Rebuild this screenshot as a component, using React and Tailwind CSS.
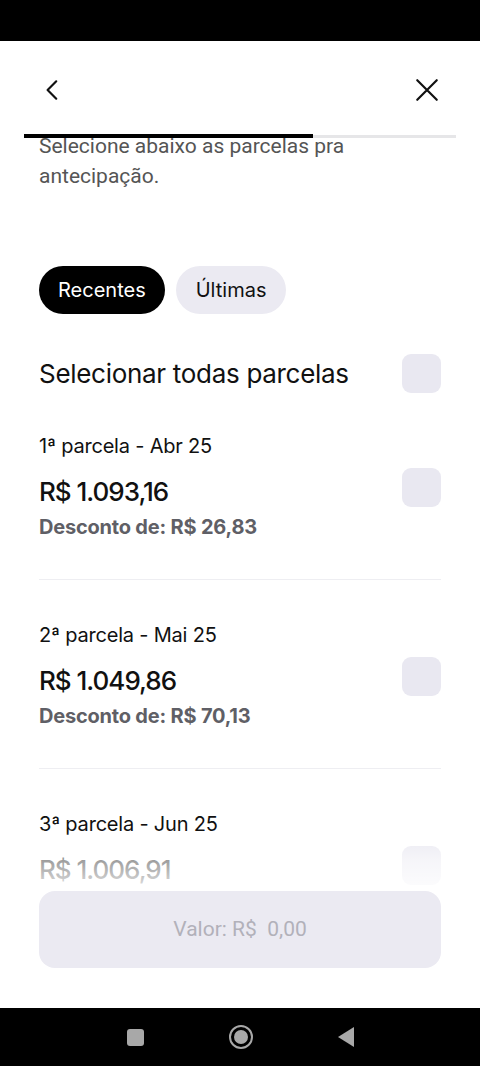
import React from 'react';

const parcelas = [
  { id: 1, label: '1ª parcela - Abr 25', valor: 'R$ 1.093,16', desconto: 'R$ 26,83' },
  { id: 2, label: '2ª parcela - Mai 25', valor: 'R$ 1.049,86', desconto: 'R$ 70,13' },
  { id: 3, label: '3ª parcela - Jun 25', valor: 'R$ 1.006,91', desconto: 'R$ 40,20' },
];

const Checkbox = () => (
  <div className="w-[39px] h-[39px] rounded-[9px] bg-[#e9e8f1] shrink-0" />
);

const ParcelaRow = ({ parcela }) => {
  return (
    <div className="border-b border-[#eeeef2] pt-[42px] pb-[35px]">
      <div className="text-[20px] leading-[26px] tracking-[-0.2px] text-[#111]">{parcela.label}</div>
      <div className="flex items-center justify-between mt-[15px]">
        <div>
          <div className="text-[26px] leading-[36px] font-medium tracking-[-1px] text-[#111]">
            {parcela.valor}
          </div>
          <div className="text-[20px] leading-[34px] font-bold tracking-[-0.2px] text-[#5f5f66]">
            Desconto de: {parcela.desconto}
          </div>
        </div>
        <div className="-mt-[44px]">
          <Checkbox />
        </div>
      </div>
    </div>
  );
};

export default function App() {
  return (
    <div className="w-[480px] h-[1066px] flex flex-col bg-white font-['Inter',sans-serif] overflow-hidden">
      {/* Status bar */}
      <div className="h-[41px] bg-black shrink-0" />

      {/* Header */}
      <div className="h-[93px] pt-[5px] flex items-center justify-between px-[40px] shrink-0">
        <svg width="26" height="26" viewBox="0 0 24 24" fill="none" stroke="#111" strokeWidth="2" strokeLinecap="round" strokeLinejoin="round">
          <path d="M15 4 L7 12 L15 20" />
        </svg>
        <svg width="26" height="26" viewBox="0 0 24 24" fill="none" stroke="#111" strokeWidth="2" strokeLinecap="round">
          <path d="M3 3 L21 21 M21 3 L3 21" />
        </svg>
      </div>

      {/* Progress */}
      <div className="px-[24px] shrink-0 relative z-10">
        <div className="flex items-center h-[4px]">
          <div className="w-[289px] h-[4px] bg-black" />
          <div className="flex-1 h-[3px] bg-[#e6e6e8]" />
        </div>
      </div>

      {/* Scroll content */}
      <div className="flex-1 relative overflow-hidden">
        <div className="px-[39px]">
          <p className="-mt-[7px] text-[21px] leading-[30px] text-[#555] font-['Roboto',sans-serif]">
            Selecione abaixo as parcelas pra
            <br />
            antecipação.
          </p>

          <div className="flex gap-[11px] mt-[75px]">
            <button className="h-[48px] px-[19px] rounded-full bg-black text-white text-[20px]">
              Recentes
            </button>
            <button className="h-[48px] px-[20px] rounded-full bg-[#ebeaf2] text-[#111] text-[20px]">
              Últimas
            </button>
          </div>

          <div className="flex items-center justify-between mt-[40px]">
            <span className="text-[26px] leading-[36px] text-[#111] tracking-[-0.3px]">
              Selecionar todas parcelas
            </span>
            <Checkbox />
          </div>

          <div className="-mt-[2px]">
            {parcelas.map((p) => (
              <ParcelaRow key={p.id} parcela={p} />
            ))}
          </div>
        </div>

        {/* Bottom fade + button */}
        <div className="absolute left-0 right-0 bottom-0">
          <div className="h-[60px] bg-gradient-to-b from-white/0 via-white/60 to-white/90" />
          <div className="bg-white px-[39px] pb-[40px]">
            <button className="w-full h-[77px] rounded-[16px] bg-[#ebeaf2] text-[21px] text-[#b2b1ba] font-['Roboto',sans-serif]">
              Valor: R$&nbsp; 0,00
            </button>
          </div>
        </div>
      </div>

      {/* Android nav */}
      <div className="h-[58px] bg-black shrink-0 flex items-center justify-center gap-[85px]">
        <div className="w-[17px] h-[17px] rounded-[3px] bg-[#a8a8a8]" />
        <div className="w-[24px] h-[24px] rounded-full border-[2px] border-[#a8a8a8] flex items-center justify-center">
          <div className="w-[14px] h-[14px] rounded-full bg-[#a8a8a8]" />
        </div>
        <svg width="16" height="20" viewBox="0 0 16 20">
          <path d="M16 0 L16 20 L0 10 Z" fill="#a8a8a8" />
        </svg>
      </div>
    </div>
  );
}
